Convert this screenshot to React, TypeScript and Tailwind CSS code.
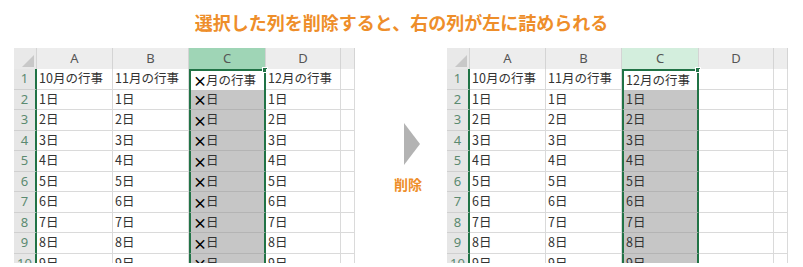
import React from "react";

const W = [23, 76, 76, 77, 75, 14];

type Side = "left" | "right";

function cellText(side: Side, col: number, r: number): React.ReactNode {
  const day = `${r - 1}日`;
  if (col === 0) return r === 1 ? "10月の行事" : day;
  if (col === 1) return r === 1 ? "11月の行事" : day;
  if (col === 2) {
    if (side === "left")
      return (
        <>
          <span className="font-bold text-black text-[14px] leading-none tracking-[-1px]">×</span>
          {r === 1 ? "月の行事" : "日"}
        </>
      );
    return r === 1 ? "12月の行事" : day;
  }
  if (col === 3) {
    if (side === "left") return r === 1 ? "12月の行事" : day;
    return "";
  }
  return "";
}

function Sheet({ side }: { side: Side }) {
  const rows = [1, 2, 3, 4, 5, 6, 7, 8, 9, 10];
  const letters = ["A", "B", "C", "D", ""];
  const cHeader = side === "left" ? "bg-[#9fd5b6]" : "bg-[#d3eedd]";
  return (
    <div
      className="w-[341px] h-[215px] overflow-hidden bg-white"
      style={{ fontFamily: '"Noto Sans", "Noto Sans CJK JP", sans-serif' }}
    >
      <div className="flex h-[21px]">
        <div className="w-[23px] h-full bg-[#e9e9e9] border-r border-[#d4d4d4] relative">
          <div className="absolute right-[2px] bottom-[2px] w-0 h-0 border-l-[12px] border-l-transparent border-b-[12px] border-b-[#c8c8c8]" />
        </div>
        {letters.map((l, i) => (
          <div
            key={i}
            className={`h-full flex items-center justify-center text-[13px] text-[#555] border-r border-[#d4d4d4] ${
              i === 2 ? cHeader : "bg-[#ededed]"
            }`}
            style={{ width: W[i + 1] }}
          >
            {l}
          </div>
        ))}
      </div>
      {rows.map((r) => (
        <div key={r} className="flex h-[20.5px]">
          <div className="w-[23px] h-full bg-[#e6e6e6] border-b border-[#d0d0d0] border-r-2 border-r-[#217346] flex items-center justify-center text-[13px] text-[#5b8a70]">
            {r}
          </div>
          {[0, 1, 2, 3, 4].map((c) => {
            const sel = c === 2;
            const cls = sel
              ? r === 1
                ? "border-x-2 border-t-2 border-[#217346] bg-white"
                : "border-x-2 border-x-[#217346] border-b border-b-[#b4b4b4] bg-[#c6c6c6]"
              : "border-r border-b border-[#dadada] bg-white";
            return (
              <div
                key={c}
                className={`relative h-full flex items-center pl-[2px] text-[12.5px] text-[#333] whitespace-nowrap ${cls}`}
                style={{ width: W[c + 1], fontFamily: '"Noto Sans CJK JP", sans-serif' }}
              >
                {cellText(side, c, r)}
                {sel && r === 1 && (
                  <div className="absolute -right-[4px] -top-[4px] w-[6px] h-[6px] bg-[#217346] border border-white" />
                )}
              </div>
            );
          })}
        </div>
      ))}
    </div>
  );
}

export default function App() {
  return (
    <div className="w-[803px] h-[267px] bg-white overflow-hidden">
      <div
        className="h-[44px] flex items-center justify-center text-[18px] font-bold text-[#ee8e2a]"
        style={{ fontFamily: '"Noto Sans CJK JP", sans-serif' }}
      >
        選択した列を削除すると、右の列が左に詰められる
      </div>
      <div className="flex mt-[4px] pl-[14px]">
        <Sheet side="left" />
        <div className="w-[92px] flex flex-col items-center pt-[75px] pl-[14px]">
          <div className="w-0 h-0 border-t-[21px] border-t-transparent border-b-[21px] border-b-transparent border-l-[16px] border-l-[#b3b3b3] ml-[8px]" />
          <div
            className="mt-[12px] text-[14px] font-bold text-[#ee8e2a] leading-none"
            style={{ fontFamily: '"Noto Sans CJK JP", sans-serif' }}
          >
            削除
          </div>
        </div>
        <Sheet side="right" />
      </div>
    </div>
  );
}
